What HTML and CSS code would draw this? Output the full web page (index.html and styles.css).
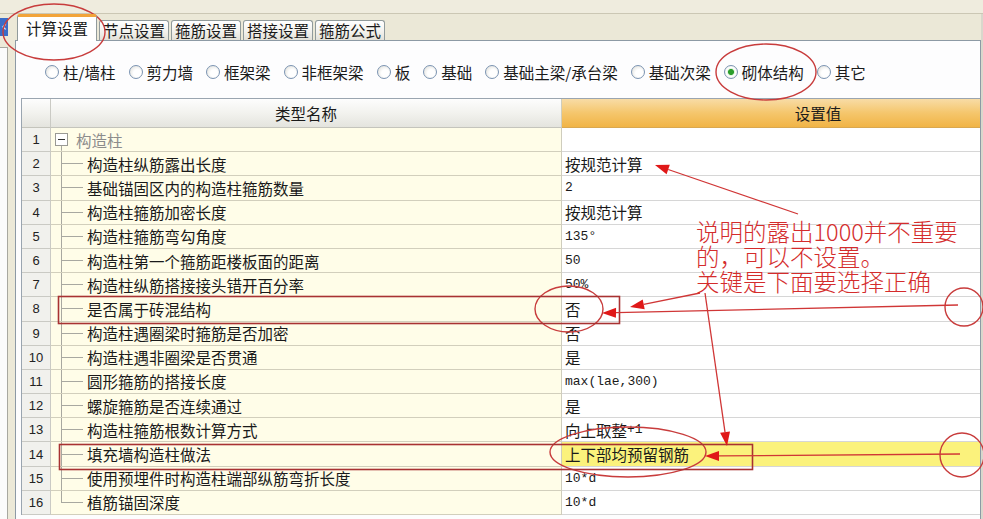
FILE: index.html
```html
<!DOCTYPE html>
<html lang="zh-CN">
<head>
<meta charset="utf-8">
<title>计算设置</title>
<link rel="stylesheet" href="styles.css">
</head>
<body>
<div class="topstrip"></div>
<div class="work">
  <div class="leftbar">
    <div class="navbtn">‹</div>
    <div class="leftbox"></div>
  </div>
  <div class="main">
    <div class="tabstrip">
      <div class="tab active">计算设置</div>
      <div class="tab">节点设置</div>
      <div class="tab">箍筋设置</div>
      <div class="tab">搭接设置</div>
      <div class="tab">箍筋公式</div>
    </div>
    <div class="panel">
      <div class="radios">
        <div class="radio"><span class="dot"></span>柱/墙柱</div>
        <div class="radio"><span class="dot"></span>剪力墙</div>
        <div class="radio"><span class="dot"></span>框架梁</div>
        <div class="radio"><span class="dot"></span>非框架梁</div>
        <div class="radio"><span class="dot"></span>板</div>
        <div class="radio"><span class="dot"></span>基础</div>
        <div class="radio"><span class="dot"></span>基础主梁/承台梁</div>
        <div class="radio"><span class="dot"></span>基础次梁</div>
        <div class="radio"><span class="dot on"></span>砌体结构</div>
        <div class="radio"><span class="dot"></span>其它</div>
      </div>
      <div class="grid">
        <div class="row head"><div class="num"></div><div class="name">类型名称</div><div class="val">设置值</div></div>
        <div class="row"><div class="num">1</div><div class="name root"><span class="minus"></span><span class="group">构造柱</span></div><div class="val"></div></div>
        <div class="row"><div class="num">2</div><div class="name leaf">构造柱纵筋露出长度</div><div class="val">按规范计算</div></div>
        <div class="row"><div class="num">3</div><div class="name leaf">基础锚固区内的构造柱箍筋数量</div><div class="val"><span class="mono">2</span></div></div>
        <div class="row"><div class="num">4</div><div class="name leaf">构造柱箍筋加密长度</div><div class="val">按规范计算</div></div>
        <div class="row"><div class="num">5</div><div class="name leaf">构造柱箍筋弯勾角度</div><div class="val"><span class="mono">135°</span></div></div>
        <div class="row"><div class="num">6</div><div class="name leaf">构造柱第一个箍筋距楼板面的距离</div><div class="val"><span class="mono">50</span></div></div>
        <div class="row"><div class="num">7</div><div class="name leaf">构造柱纵筋搭接接头错开百分率</div><div class="val"><span class="mono">50%</span></div></div>
        <div class="row"><div class="num">8</div><div class="name leaf">是否属于砖混结构</div><div class="val">否</div></div>
        <div class="row"><div class="num">9</div><div class="name leaf">构造柱遇圈梁时箍筋是否加密</div><div class="val">否</div></div>
        <div class="row"><div class="num">10</div><div class="name leaf">构造柱遇非圈梁是否贯通</div><div class="val">是</div></div>
        <div class="row"><div class="num">11</div><div class="name leaf">圆形箍筋的搭接长度</div><div class="val"><span class="mono">max(lae,300)</span></div></div>
        <div class="row"><div class="num">12</div><div class="name leaf">螺旋箍筋是否连续通过</div><div class="val">是</div></div>
        <div class="row"><div class="num">13</div><div class="name leaf">构造柱箍筋根数计算方式</div><div class="val">向上取整<span class="mono">+1</span></div></div>
        <div class="row"><div class="num">14</div><div class="name leaf">填充墙构造柱做法</div><div class="val hl">上下部均预留钢筋</div></div>
        <div class="row"><div class="num">15</div><div class="name leaf">使用预埋件时构造柱端部纵筋弯折长度</div><div class="val"><span class="mono">10*d</span></div></div>
        <div class="row"><div class="num">16</div><div class="name leaf last">植筋锚固深度</div><div class="val"><span class="mono">10*d</span></div></div>
      </div>
    </div>
  </div>
  <div class="rightedge"></div>
</div>

<svg class="marks" width="983" height="519" viewBox="0 0 983 519">
  <g fill="none" stroke="#c83c3c" stroke-width="1.4">
    <ellipse cx="54" cy="32" rx="51" ry="28"/>
    <ellipse cx="766" cy="72" rx="50" ry="28"/>
    <ellipse cx="569" cy="309" rx="34" ry="23"/>
    <circle cx="964" cy="307" r="19"/>
    <ellipse cx="628" cy="452" rx="78" ry="25"/>
    <circle cx="962" cy="455" r="22"/>
  </g>
  <g fill="none" stroke="#a83232" stroke-width="1.6">
    <rect x="58.5" y="296.5" width="561" height="27"/>
    <rect x="59.5" y="444.5" width="693" height="25"/>
  </g>
  <g stroke="#d03636" stroke-width="1.3">
    <line x1="958" y1="305" x2="616" y2="312.7"/>
    <line x1="700" y1="293" x2="643.7" y2="304.3"/>
    <line x1="798" y1="214" x2="668.2" y2="169.5"/>
    <line x1="705" y1="293" x2="725" y2="432.1"/>
    <line x1="960" y1="454" x2="719" y2="455.9"/>
  </g>
  <g fill="#e01818">
    <polygon points="602,313 616.1,307.7 615.9,317.7"/>
    <polygon points="630,307 642.7,299.4 644.7,309.2"/>
    <polygon points="655,165 669.8,164.8 666.6,174.2"/>
    <polygon points="727,446 720.1,432.8 730,431.4"/>
    <polygon points="705,456 719,450.9 719,460.9"/>
  </g>
</svg>
<div class="note">
  <div class="line">说明的露出1000并不重要</div>
  <div class="line">的，可以不设置。</div>
  <div class="line">关键是下面要选择正确</div>
</div>
</body>
</html>
```

FILE: styles.css
```css
* { box-sizing: border-box; margin: 0; padding: 0; }
html, body { width: 983px; height: 519px; overflow: hidden; }
body {
  position: relative;
  background: #ece9d8;
  font-family: "Noto Sans CJK SC", sans-serif;
  color: #1a1a1a;
}
.topstrip { height: 14px; background: #efecde; border-bottom: 1px solid #cbc7b4; }
.work { display: flex; height: 505px; }

.leftbar { width: 15px; flex: none; display: flex; flex-direction: column; }
.navbtn {
  margin-top: 4px; width: 8px; height: 18px;
  background: #3a6cc8; color: #fff;
  font: 14px/17px "DejaVu Sans", sans-serif; text-align: center; overflow: hidden;
}
.leftbox {
  margin-top: 11px; width: 8px; flex: 1;
  background: #fbfbfb; border-top: 1px solid #a8a8a0; border-right: 1px solid #a8a8a0;
}

.main { width: 966px; flex: none; display: flex; flex-direction: column; }
.rightedge { flex: 1; background: #d9d7cc; }

.tabstrip {
  height: 26px; display: flex; align-items: flex-end; gap: 2px;
  padding-left: 2px; background: #ebe8d7;
}
.tab {
  height: 20px; padding: 0 3px;
  border: 1px solid #919b9c; border-bottom: none; border-radius: 3px 3px 0 0;
  background: linear-gradient(#ffffff, #f3f2ee 55%, #e3e1d8);
  font-size: 15.5px; line-height: 19px; white-space: nowrap;
}
.tab.active {
  height: 27px; margin-bottom: -1px; position: relative; z-index: 1;
  padding: 0 8px; background: #ffffff;
  border-top: 3px solid #f2a43a; line-height: 23px;
}

.panel {
  flex: 1; overflow: hidden;
  background: #fdfdfe;
  border: 1px solid #8d9aa5; border-bottom: none;
  padding-left: 5px;
}

.radios {
  height: 57px; display: flex; align-items: center;
  padding: 5px 0 0 24px; font-size: 15.5px; white-space: nowrap;
}
.radio { display: flex; align-items: center; gap: 4px; margin-right: 13px; }
.dot {
  width: 14px; height: 14px; border-radius: 50%; flex: none;
  border: 1px solid #7b94b2;
  background: radial-gradient(circle at 60% 60%, #ffffff 35%, #d9d9d3 100%);
}
.dot.on {
  background: radial-gradient(circle, #2c9e2c 0 2.6px, #dff3df 3.4px, #ffffff 4.5px, #dcdcd6 100%);
}

.grid { width: 1060px; border-top: 1px solid #9aa5b0; border-left: 1px solid #9aa5b0; }
.row { display: flex; height: 24.2px; }
.row.head { height: 29px; }
.num, .name, .val { display: flex; align-items: center; flex: none; }
.num {
  width: 29px; justify-content: center;
  border-right: 1px solid #cacac4; border-bottom: 1px solid #cacac4;
  background: #f1f1ed;
  font: 13px "Liberation Sans", "DejaVu Sans", sans-serif; color: #222;
}
.name {
  width: 511px; padding-left: 36px; font-size: 15.5px;
  border-right: 1px solid #cfcdbd; border-bottom: 1px solid #d2cfbc;
  background-color: #fffde8;
}
.val {
  width: 512px; padding-left: 3px; font-size: 15.5px;
  border-bottom: 1px solid #d6d6d6; background: #ffffff;
}
.mono { font: 13px "Liberation Mono", monospace; }

.head .num, .head .name {
  background: linear-gradient(#fdfdfd, #f2f2ee 50%, #e4e4de);
  border-bottom-color: #c4c4bc;
}
.head .name { padding-left: 0; justify-content: center; }
.head .val {
  padding-left: 0; justify-content: center;
  background: linear-gradient(#f8dca6, #f5c66c 50%, #f1b446);
  border-bottom-color: #d9a850;
}

.leaf {
  background-image:
    linear-gradient(#a8a8a0, #a8a8a0),
    linear-gradient(#a8a8a0, #a8a8a0);
  background-repeat: no-repeat;
  background-size: 1px 100%, 22px 1px;
  background-position: 10px 0, 10px 50%;
}
.leaf.last { background-size: 1px 50%, 22px 1px; }
.root {
  padding-left: 4px;
  background-image: linear-gradient(#a8a8a0, #a8a8a0);
  background-repeat: no-repeat;
  background-size: 1px 25%;
  background-position: 10px 100%;
}
.minus {
  width: 13px; height: 13px; margin-right: 8px; flex: none;
  border: 1px solid #9a9a94; background: #fff;
  background-image: linear-gradient(#333, #333);
  background-repeat: no-repeat; background-size: 7px 1px; background-position: center;
}
.group { color: #8c8c8c; }
.val.hl { background: #fbf27c; }

.marks { position: absolute; left: 0; top: 0; pointer-events: none; }
.note {
  position: absolute; left: 696px; top: 219px;
  display: flex; flex-direction: column;
  font-size: 23.5px; font-weight: 300; color: #d42c2c; white-space: nowrap;
}
.note .line { height: 25px; line-height: 25px; }
```
